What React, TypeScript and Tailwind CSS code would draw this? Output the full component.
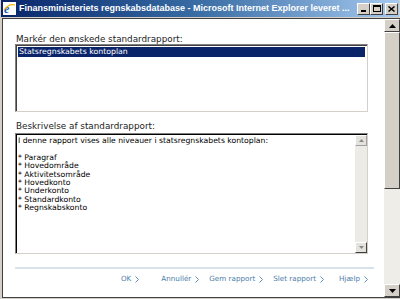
import React from "react";

const items = [
  "Paragraf",
  "Hovedområde",
  "Aktivitetsområde",
  "Hovedkonto",
  "Underkonto",
  "Standardkonto",
  "Regnskabskonto",
];

const links = [
  { label: "OK", ml: "ml-0" },
  { label: "Annullér", ml: "ml-[22px]" },
  { label: "Gem rapport", ml: "ml-[10px]" },
  { label: "Slet rapport", ml: "ml-[10px]" },
  { label: "Hjælp", ml: "ml-[15px]" },
];

function Arrow({ up }: { up?: boolean }) {
  return (
    <svg width="7" height="4" viewBox="0 0 7 4">
      {up ? <path d="M3.5 0 L7 4 L0 4 Z" fill="#000" /> : <path d="M0 0 L7 0 L3.5 4 Z" fill="#000" />}
    </svg>
  );
}

function SmallArrow({ up }: { up?: boolean }) {
  return (
    <svg width="5" height="3" viewBox="0 0 5 3">
      {up ? <path d="M2.5 0 L5 3 L0 3 Z" fill="#8a8a8a" /> : <path d="M0 0 L5 0 L2.5 3 Z" fill="#8a8a8a" />}
    </svg>
  );
}

function CapButton({ children }: { children: React.ReactNode }) {
  return (
    <div className="w-[13px] h-[12px] shrink-0 bg-[#d4d0c8] border border-t-white border-l-white border-r-[#404040] border-b-[#404040] flex items-center justify-center">
      {children}
    </div>
  );
}

export default function App() {
  return (
    <div className="w-[400px] h-[299px] bg-[#d4d0c8] flex flex-col overflow-hidden [font-family:'DejaVu_Sans',Verdana,sans-serif]">
      {/* title bar */}
      <div className="h-[17px] mx-[1px] flex items-center bg-linear-to-r from-[#0a246a] via-[#3a6ea5] to-[#a6caf0] pl-[2px] pr-[1px]">
        <svg width="13" height="13" viewBox="0 0 13 13" className="shrink-0">
          <rect x="0" y="0" width="13" height="13" fill="#ffffff" />
          <text x="1" y="11" fontSize="12" fontWeight="bold" fill="#1e5bc6" fontFamily="Liberation Serif, serif" fontStyle="italic">e</text>
          <path d="M1 8 Q6 1 12 3" stroke="#f0b400" strokeWidth="1.2" fill="none" />
        </svg>
        <span className="ml-[3px] text-white font-bold text-[9px] leading-none whitespace-nowrap overflow-hidden flex-1 min-w-0 [font-family:'Liberation_Sans',Arial,sans-serif]">
          Finansministeriets regnskabsdatabase - Microsoft Internet Explorer leveret ...
        </span>
        <div className="flex items-center shrink-0">
          <CapButton>
            <div className="w-[5px] h-[2px] bg-black mt-[5px] -ml-[1px]" />
          </CapButton>
          <CapButton>
            <div className="w-[8px] h-[7px] border border-black border-t-2" />
          </CapButton>
          <div className="ml-[2px]">
            <CapButton>
              <svg width="7" height="6" viewBox="0 0 7 6">
                <path d="M0.5 0.5 L6.5 5.5 M6.5 0.5 L0.5 5.5" stroke="#000" strokeWidth="1.5" />
              </svg>
            </CapButton>
          </div>
        </div>
      </div>

      {/* window body */}
      <div className="flex-1 flex pl-[2px] pt-[1px] pb-[1px] min-h-0">
        <div className="flex-1 flex border-t border-l border-b border-[#404040] min-h-0">
          <div className="flex-1 bg-white pl-[12px] pr-[9px] pt-[15px] flex flex-col">
            <div className="text-[8.8px] leading-[10px] text-[#222] pl-[1px]">Markér den ønskede standardrapport:</div>
            <div className="w-[353px] h-[68px] border border-t-[#808080] border-l-[#808080] border-r-[#d4d0c8] border-b-[#d4d0c8] shadow-[inset_1px_1px_0_#404040] p-[2px]">
              <div className="h-[10px] bg-[#0a246a] text-white text-[7.8px] leading-[10px] pl-[1px]">
                Statsregnskabets kontoplan
              </div>
            </div>

            <div className="mt-[9px] text-[8.8px] leading-[10px] text-[#222] pl-[1px]">Beskrivelse af standardrapport:</div>
            <div className="mt-[2px] w-[353px] h-[121px] flex border border-t-[#808080] border-l-[#808080] border-r-[#d4d0c8] border-b-[#d4d0c8] shadow-[inset_1px_1px_0_#000]">
              <div className="flex-1 pl-[2px] pt-[3px] text-[7.7px] leading-[8.4px] text-black">
                <div>I denne rapport vises alle niveauer i statsregnskabets kontoplan:</div>
                <div className="h-[8.4px]" />
                {items.map((t) => (
                  <div key={t}>* {t}</div>
                ))}
              </div>
              <div className="w-[12px] flex flex-col bg-[#ecebe6] mt-[1px]">
                <div className="h-[11px] bg-[#e4e2dc] border border-t-white border-l-white border-r-[#a0a0a0] border-b-[#a0a0a0] flex items-center justify-center">
                  <SmallArrow up />
                </div>
                <div className="flex-1" />
                <div className="h-[11px] bg-[#e4e2dc] border border-t-white border-l-white border-r-[#404040] border-b-[#404040] flex items-center justify-center">
                  <SmallArrow />
                </div>
              </div>
            </div>

            <div className="mt-[13px] h-[2px] w-[359px] bg-[#d9e3e9]" />
            <div className="mt-[4px] w-[353px] flex justify-end items-center text-[7.2px] leading-[12px] text-[#4d7ea8]">
              {links.map((l) => (
                <div key={l.label} className={`flex items-center gap-[4px] ${l.ml}`}>
                  <span>{l.label}</span>
                  <svg width="4" height="7" viewBox="0 0 4 7">
                    <path d="M0.5 0.5 L3.5 3.5 L0.5 6.5" stroke="#4d7ea8" strokeWidth="0.9" fill="none" />
                  </svg>
                </div>
              ))}
            </div>
          </div>

          {/* main scrollbar */}
          <div className="w-[16px] flex flex-col bg-[#eeede8]">
            <div className="h-[13px] bg-[#d4d0c8] border border-t-white border-l-white border-r-[#404040] border-b-[#404040] flex items-center justify-center">
              <Arrow up />
            </div>
            <div className="h-[157px] bg-[#d4d0c8] border border-t-white border-l-white border-r-[#404040] border-b-[#404040]" />
            <div className="flex-1" />
            <div className="h-[13px] bg-[#d4d0c8] border border-t-white border-l-white border-r-[#404040] border-b-[#404040] flex items-center justify-center">
              <Arrow />
            </div>
          </div>
        </div>
      </div>
    </div>
  );
}
